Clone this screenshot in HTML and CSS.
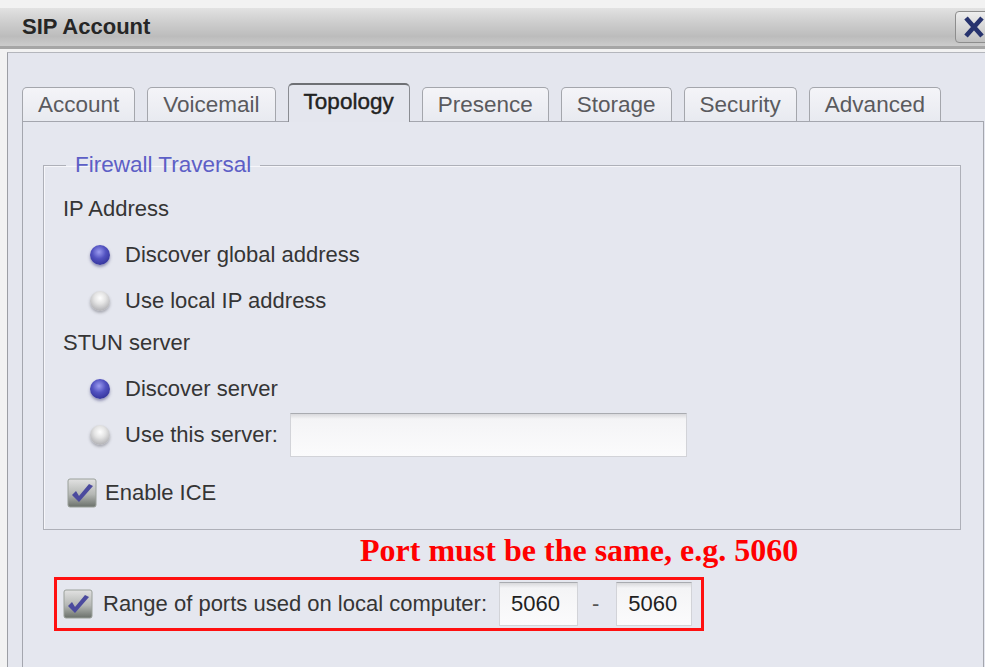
FILE: index.html
```html
<!DOCTYPE html>
<html lang="en">
<head>
<meta charset="utf-8">
<title>SIP Account</title>
<link rel="stylesheet" href="styles.css">
</head>
<body>
<div class="window">
  <div class="titlebar">
    <span class="title">SIP Account</span>
    <span class="close" aria-label="Close">
      <svg width="24" height="24" viewBox="0 0 24 24">
        <path d="M4 3 L20 21 M20 3 L4 21" stroke="#27336e" stroke-width="4.6" stroke-linecap="butt"/>
      </svg>
    </span>
  </div>
  <div class="frame">
    <div class="tabs">
      <div class="tab">Account</div>
      <div class="tab">Voicemail</div>
      <div class="tab active">Topology</div>
      <div class="tab">Presence</div>
      <div class="tab">Storage</div>
      <div class="tab">Security</div>
      <div class="tab">Advanced</div>
    </div>
    <div class="panel">
      <fieldset class="group">
        <legend>Firewall Traversal</legend>
        <div class="row heading">IP Address</div>
        <div class="row option"><span class="radio on"></span>Discover global address</div>
        <div class="row option"><span class="radio"></span>Use local IP address</div>
        <div class="row heading stun">STUN server</div>
        <div class="row option gap"><span class="radio on"></span>Discover server</div>
        <div class="row option"><span class="radio"></span>Use this server:<span class="field server"></span></div>
        <div class="row check-row">
          <span class="check">
            <svg width="30" height="30" viewBox="0 0 30 30">
              <defs>
                <linearGradient id="cb1" x1="0" y1="0" x2="0" y2="1">
                  <stop offset="0" stop-color="#e2e2e2"/>
                  <stop offset="0.55" stop-color="#b4b7b4"/>
                  <stop offset="1" stop-color="#6a706a"/>
                </linearGradient>
              </defs>
              <rect x="1" y="1" width="28" height="28" rx="2" fill="url(#cb1)" stroke="#9aa09a"/>
              <path d="M5 17 L12 24 L26 8 L22 6 L12 18 L9 13 Z" fill="#4b4a9e"/>
            </svg>
          </span>Enable ICE
        </div>
      </fieldset>
      <div class="note">Port must be the same, e.g. 5060</div>
      <div class="ports">
        <span class="check">
          <svg width="30" height="30" viewBox="0 0 30 30">
            <defs>
              <linearGradient id="cb2" x1="0" y1="0" x2="0" y2="1">
                <stop offset="0" stop-color="#e2e2e2"/>
                <stop offset="0.55" stop-color="#b4b7b4"/>
                <stop offset="1" stop-color="#6a706a"/>
              </linearGradient>
            </defs>
            <rect x="1" y="1" width="28" height="28" rx="2" fill="url(#cb2)" stroke="#9aa09a"/>
            <path d="M5 17 L12 24 L26 8 L22 6 L12 18 L9 13 Z" fill="#4b4a9e"/>
          </svg>
        </span>
        <span class="ports-label">Range of ports used on local computer:</span>
        <span class="field port first">5060</span>
        <span class="dash">-</span>
        <span class="field port second">5060</span>
      </div>
    </div>
  </div>
</div>
</body>
</html>
```

FILE: styles.css
```css
html, body {
  margin: 0;
  padding: 0;
}

body {
  width: 985px;
  height: 667px;
  overflow: hidden;
  background: #f2f2f2;
  font-family: "Liberation Sans", Arial, sans-serif;
  font-size: 22px;
  color: #353535;
}

.window {
  padding-top: 8px;
  height: 659px;
  display: flex;
  flex-direction: column;
}

/* title bar */
.titlebar {
  height: 38px;
  display: flex;
  align-items: center;
  justify-content: space-between;
  padding-left: 22px;
  background: linear-gradient(to bottom, #e2e2e2 0%, #cfcfcf 35%, #bcbcbc 75%, #cccccc 100%);
  border-bottom: 3px solid #a6a6a6;
}

.title {
  font-weight: bold;
  font-size: 22px;
  color: #262626;
}

.close {
  width: 36px;
  height: 32px;
  margin-right: -6px;
  display: flex;
  align-items: center;
  justify-content: flex-start;
  padding-left: 6px;
  box-sizing: border-box;
  border: 1px solid #8d8d8d;
  border-radius: 4px;
  background: linear-gradient(to bottom, #eeeeee, #c0c0c0);
}

/* outer frame */
.frame {
  flex: 1;
  margin-left: 7px;
  margin-top: 3px;
  width: 990px;
  border-left: 1px solid #9c9ea4;
  border-top: 1px solid #b4b6bc;
  background: #e4e6ee;
  padding: 30px 0 0 14px;
  box-sizing: border-box;
  display: flex;
  flex-direction: column;
}

/* tabs */
.tabs {
  display: flex;
  align-items: flex-end;
  gap: 12px;
  height: 38px;
  position: relative;
  z-index: 1;
}

.tab {
  height: 34px;
  padding: 0 15px;
  display: flex;
  align-items: center;
  font-size: 22.5px;
  color: #5a5a5e;
  border: 1px solid #a4a6ac;
  border-bottom: none;
  border-radius: 5px 5px 0 0;
  background: linear-gradient(to bottom, #f4f4f8, #e8eaf0);
  box-sizing: border-box;
}

.tab.active {
  height: 39px;
  margin-bottom: -1px;
  border: 1px solid #8a8c92;
  border-top: 2px solid #6e7074;
  border-bottom: none;
  background: #e4e6ee;
  color: #222;
  -webkit-text-stroke: 0.4px #222;
  padding-bottom: 4px;
}

/* tab page */
.panel {
  width: 962px;
  flex: 1;
  border: 1px solid #a4a6ae;
  border-bottom: none;
  background: #e5e7ef;
  padding: 31px 22px 0 20px;
  box-sizing: border-box;
}

.group {
  margin: 0;
  padding: 9px 0 13px 19px;
  border: 1px solid #aeb0b8;
  box-shadow: inset 1px 1px 0 #f6f6fa;
  min-width: 0;
}

.group legend {
  margin-left: 3px;
  padding: 0 9px;
  line-height: 24px;
  font-size: 22.5px;
  color: #5d5fc6;
}

.row {
  display: flex;
  align-items: center;
  height: 46px;
}

.row.stun {
  height: 38px;
}

.row.gap {
  margin-top: 4px;
}

.option {
  padding-left: 27px;
}

.radio {
  width: 20px;
  height: 20px;
  border-radius: 50%;
  margin-right: 15px;
  flex: none;
  background: radial-gradient(circle at 50% 35%, #ffffff 0%, #e4e4e4 35%, #a9a9ad 85%, #9a9a9e 100%);
  box-shadow: 0 2px 3px rgba(90, 90, 100, 0.45);
}

.radio.on {
  background: radial-gradient(circle at 45% 35%, #9c9cf0 0%, #5252c0 40%, #2f2f94 85%, #24247a 100%);
  box-shadow: 0 2px 3px rgba(60, 60, 120, 0.5);
}

.field {
  height: 44px;
  box-sizing: border-box;
  border: 1px solid #d2d3d8;
  border-top-color: #a9abb0;
  background: linear-gradient(to bottom, #d9d9dc 0px, #f4f4f6 5px, #fbfbfc 100%);
  display: flex;
  align-items: center;
  color: #1f1f1f;
}

.field.server {
  width: 397px;
  margin-left: 12px;
}

.check-row {
  margin-top: 12px;
  padding-left: 4px;
}

.check {
  width: 30px;
  height: 30px;
  flex: none;
  margin-right: 8px;
  display: block;
}

.check svg {
  display: block;
}

/* annotation */
.note {
  margin: 2px 0 0 317px;
  line-height: 36px;
  font-family: "Liberation Serif", "Times New Roman", serif;
  font-weight: bold;
  font-size: 32px;
  color: #ff0000;
}

.ports {
  margin: 9px 0 0 11px;
  width: 650px;
  height: 54px;
  box-sizing: border-box;
  border: 3px solid #ff1010;
  display: flex;
  align-items: center;
  padding-left: 6px;
}

.ports .check {
  margin-right: 10px;
}

.field.port {
  padding-left: 11px;
  font-size: 22px;
}

.field.first {
  width: 79px;
  margin-left: 12px;
}

.dash {
  margin: 0 17px 0 14px;
  color: #555;
}

.field.second {
  width: 76px;
}
```
